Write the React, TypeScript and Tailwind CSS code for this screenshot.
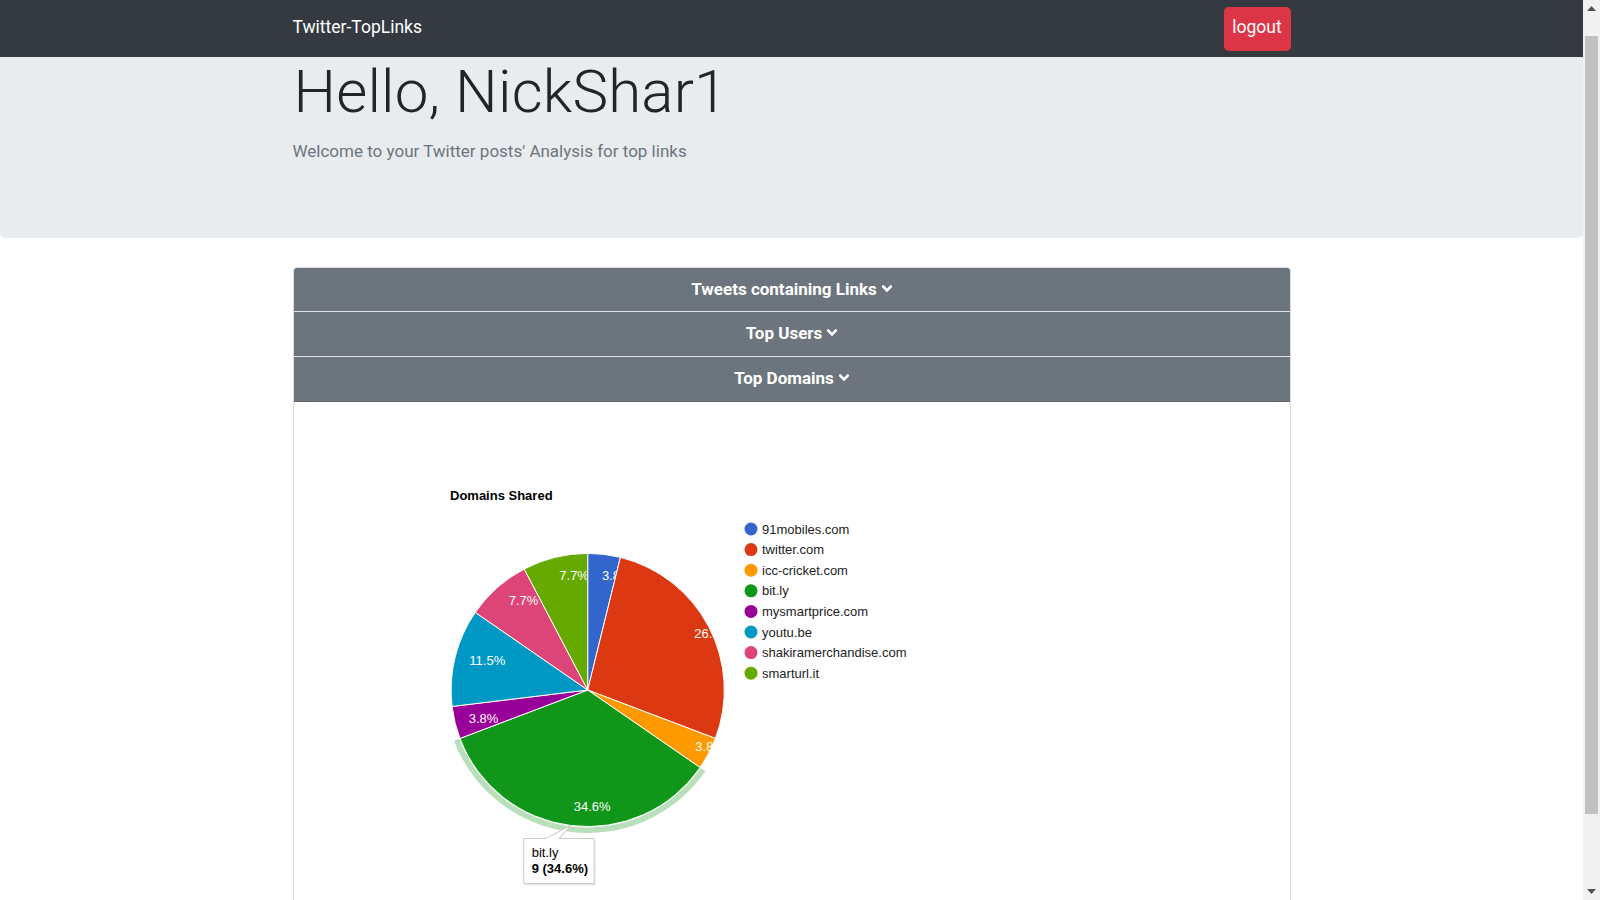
type Slice = { name: string; value: number; color: string };

const slices: Slice[] = [
  { name: "91mobiles.com", value: 1, color: "#3366cc" },
  { name: "twitter.com", value: 7, color: "#dc3912" },
  { name: "icc-cricket.com", value: 1, color: "#ff9900" },
  { name: "bit.ly", value: 9, color: "#109618" },
  { name: "mysmartprice.com", value: 1, color: "#990099" },
  { name: "youtu.be", value: 3, color: "#0099c6" },
  { name: "shakiramerchandise.com", value: 2, color: "#dd4477" },
  { name: "smarturl.it", value: 2, color: "#66aa00" },
];

const labels = [
  { text: "3.8%", x: 601, y: 580 },
  { text: "26.9%", x: 693.3, y: 637.5 },
  { text: "3.8%", x: 694.3, y: 750.5 },
  { text: "34.6%", x: 572.7, y: 810.5 },
  { text: "3.8%", x: 467.7, y: 723.3 },
  { text: "11.5%", x: 468.3, y: 665 },
  { text: "7.7%", x: 507.7, y: 605 },
  { text: "7.7%", x: 558.3, y: 580 },
];

const CX = 586.7;
const CY = 690;
const R = 136.6;

function pt(a: number, r: number) {
  return [CX + r * Math.sin(a), CY - r * Math.cos(a)];
}

function slicePath(a0: number, a1: number) {
  const [x0, y0] = pt(a0, R);
  const [x1, y1] = pt(a1, R);
  const large = a1 - a0 > Math.PI ? 1 : 0;
  return `M${CX} ${CY}L${x0} ${y0}A${R} ${R} 0 ${large} 1 ${x1} ${y1}Z`;
}

function ringPath(a0: number, a1: number, r1: number, r2: number) {
  const [ox0, oy0] = pt(a0, r2);
  const [ox1, oy1] = pt(a1, r2);
  const [ix1, iy1] = pt(a1, r1);
  const [ix0, iy0] = pt(a0, r1);
  const large = a1 - a0 > Math.PI ? 1 : 0;
  return `M${ox0} ${oy0}A${r2} ${r2} 0 ${large} 1 ${ox1} ${oy1}L${ix1} ${iy1}A${r1} ${r1} 0 ${large} 0 ${ix0} ${iy0}Z`;
}

function PieChart() {
  const total = slices.reduce((s, d) => s + d.value, 0);
  let acc = 0;
  const angles = slices.map((d) => {
    const a0 = (acc / total) * Math.PI * 2;
    acc += d.value;
    const a1 = (acc / total) * Math.PI * 2;
    return [a0, a1];
  });
  const font = "'Liberation Sans', Arial, sans-serif";
  return (
    <svg width="996" height="598" className="block">
      <defs>
        {angles.map(([a0, a1], i) => (
          <clipPath id={`clip${i}`} key={i}>
            <path d={slicePath(a0, a1)} />
          </clipPath>
        ))}
      </defs>
      <g transform="translate(-293,-402)">
        <text x="449" y="500" fontFamily={font} fontSize="13" fontWeight="bold" fill="#000">
          Domains Shared
        </text>
        <path d={ringPath(angles[3][0], angles[3][1], 137.4, 143)} fill="#b7dfb9" />
        {angles.map(([a0, a1], i) => (
          <path key={i} d={slicePath(a0, a1)} fill={slices[i].color} stroke="#ffffff" strokeWidth="1" />
        ))}
        {labels.map((l, i) => (
          <g key={i} clipPath={`url(#clip${i})`}>
            <text x={l.x} y={l.y} fontFamily={font} fontSize="13" fill="#ffffff">
              {l.text}
            </text>
          </g>
        ))}
        {slices.map((d, i) => {
          const cy = 529 + i * 20.6;
          return (
            <g key={d.name}>
              <circle cx="750" cy={cy} r="6.5" fill={d.color} />
              <text x="761" y={cy + 4.6} fontFamily={font} fontSize="13" fill="#222222">
                {d.name}
              </text>
            </g>
          );
        })}
        <path
          d="M524.2 840.5L545 840.5L570 825L558 840.5L594.5 840.5L594.5 885.5L524.2 885.5Z"
          fill="#000"
          fillOpacity="0.1"
        />
        <path
          d="M522.7 838.5L545 838.5L570 825L558 838.5L593 838.5L593 883.5L522.7 883.5Z"
          fill="#ffffff"
          stroke="#cccccc"
          strokeWidth="1"
        />
        <text x="530.7" y="856.7" fontFamily={font} fontSize="13" fill="#000">
          bit.ly
        </text>
        <text x="530.7" y="873" fontFamily={font} fontSize="13" fontWeight="bold" fill="#000">
          9 (34.6%)
        </text>
      </g>
    </svg>
  );
}

function Chevron() {
  return (
    <svg width="10" height="8" viewBox="0 0 10 8" className="mb-[2px]">
      <path d="M1.3 1.6L5 5.3L8.7 1.6" fill="none" stroke="#ffffff" strokeWidth="2.6" strokeLinecap="square" />
    </svg>
  );
}

function AccHeader({ title, first, last }: { title: string; first?: boolean; last?: boolean }) {
  const base = "border-b bg-[#6c757d] flex items-center justify-center text-white font-bold text-[17px] gap-[5px]";
  const h = first ? "h-[44px] " : "h-[45px] ";
  const b = last ? " border-[#5f666d]" : " border-[#dfe2e5]";
  return (
    <div className={h + base + b}>
      <span>{title}</span>
      <Chevron />
    </div>
  );
}

function Scrollbar() {
  return (
    <div className="w-[17px] h-[900px] shrink-0 bg-[#f1f1f1] flex flex-col">
      <div className="h-[17px] flex items-center justify-center">
        <svg width="9" height="5" viewBox="0 0 9 5">
          <path d="M0 5L4.5 0L9 5Z" fill="#505050" />
        </svg>
      </div>
      <div className="flex-1 px-[2px] pt-[19px]">
        <div className="h-[778px] bg-[#c1c1c1]" />
      </div>
      <div className="h-[17px] flex items-center justify-center">
        <svg width="9" height="5" viewBox="0 0 9 5">
          <path d="M0 0L9 0L4.5 5Z" fill="#505050" />
        </svg>
      </div>
    </div>
  );
}

export default function App() {
  return (
    <div className="flex h-[900px] overflow-hidden bg-white font-['Roboto',sans-serif] text-[#212529]">
      <div className="flex-1 min-w-0">
        <nav className="h-[57px] bg-[#343a40]">
          <div className="w-[998px] mx-auto h-full flex items-center justify-between">
            <span className="text-white text-[17.5px] pb-[3px]">Twitter-TopLinks</span>
            <button className="h-[44px] w-[67px] bg-[#dc3545] text-white text-[17.5px] rounded-[5px] flex items-center justify-center pb-[2px]">
              logout
            </button>
          </div>
        </nav>
        <div className="bg-[#e9ecef] h-[181px] rounded-b-[5px]">
          <div className="w-[998px] mx-auto">
            <h1 className="pt-[5px] pl-[1px] text-[60px] leading-none font-light tracking-[0.2px] text-[#212529]">
              Hello, NickShar1
            </h1>
            <p className="mt-[21px] text-[17px] leading-none text-[#6c757d]">
              Welcome to your Twitter posts' Analysis for top links
            </p>
          </div>
        </div>
        <div className="w-[998px] mx-auto mt-[29px]">
          <div className="border border-[#dcdcdc] rounded-[4px] overflow-hidden">
            <AccHeader title="Tweets containing Links" first />
            <AccHeader title="Top Users" />
            <AccHeader title="Top Domains" last />
            <div className="bg-white">
              <PieChart />
            </div>
          </div>
        </div>
      </div>
      <Scrollbar />
    </div>
  );
}
